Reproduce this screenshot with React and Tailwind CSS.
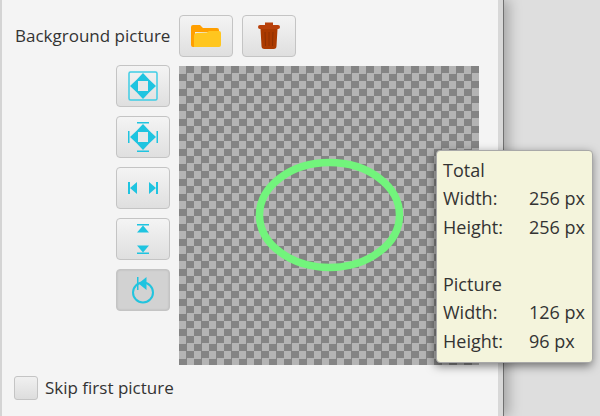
import React from 'react';

const FONT = { fontFamily: '"Open Sans", sans-serif' };

// raised toolbar button, the pressed one is darker
const ToolButton = ({ pressed, children }) => (
  <div
    className={
      'flex h-[42px] w-[54px] items-center justify-center rounded-[4px] border border-[#c4c4c4] ' +
      (pressed
        ? 'bg-[#d2d2d2] shadow-[inset_0_0_2px_#b0b0b0]'
        : 'bg-gradient-to-b from-[#f4f4f4] to-[#dfdfdf]')
    }
  >
    {children}
  </div>
);

const FolderIcon = () => (
  <svg width="30" height="24" viewBox="0 0 30 24">
    <path d="M0 3a2 2 0 0 1 2-2h7l3 3h14a2 2 0 0 1 2 2v2H4v15H2a2 2 0 0 1-2-2z" fill="#ff9f00" />
    <path d="M3 12a3 3 0 0 1 3-3l10-.5 2-1.500h10a2 2 0 0 1 2 2V21a2 2 0 0 1-2 2H3z" fill="#ffc61f" />
  </svg>
);

const TrashIcon = () => (
  <svg width="22" height="27" viewBox="0 0 22 27">
    <path d="M7 3V0.500h8V3h5a1.800 1.800 0 0 1 0 4H2a1.800 1.800 0 0 1 0-4z" fill="#b8400a" />
    <path d="M2.500 7h17l-1 17a3 3 0 0 1-3 3h-9a3 3 0 0 1-3-3z" fill="#ab3a00" />
    <path d="M7 10l.5 14M11 10v14M15 10l-.5 14" stroke="#8e3000" strokeWidth="1" />
  </svg>
);

const Arrows = ({ frame, bars }) => (
  <svg width="30" height="30" viewBox="0 0 30 30" fill="#1fc4e0">
    {frame && <rect x="1" y="1" width="28" height="28" rx="1.500" fill="none" stroke="#3fcde5" strokeWidth="1.500" />}
    <path d="M15 2l7.500 8h-15zM15 28l-7.500-8h15zM2 15l8-7.500v15zM28 15l-8 7.500v-15z" />
    <rect x="10" y="10" width="10" height="10" fill="#e8e8e8" />
    {bars && <path d="M9 0h12v1.500H9zM9 28.500h12V30H9zM0 9h1.500v12H0zM28.500 9H30v12h-1.500z" />}
  </svg>
);

const HorizontalIcon = () => (
  <svg width="30" height="12" viewBox="0 0 30 12" fill="#1fc4e0">
    <path d="M0 0h2v12H0zM2 6l7-6v12zM30 0h-2v12h2zM28 6l-7 6V0z" />
  </svg>
);

const VerticalIcon = () => (
  <svg width="12" height="30" viewBox="0 0 12 30" fill="#1fc4e0">
    <path d="M0 0h12v1.500H0zM6 1.500l6 7H0zM0 30h12v-1.500H0zM6 28.500l-6-7h12z" />
  </svg>
);

const RotateIcon = () => (
  <svg width="24" height="30" viewBox="0 0 24 30">
    <circle cx="12" cy="17.500" r="10" fill="none" stroke="#22c4de" strokeWidth="2" />
    <path d="M6 2h1.500v13H6zM7.500 8.500l8-6.500v13z" fill="#1fc4e0" />
  </svg>
);

const InfoRow = ({ label, value }) => (
  <div className="flex h-[28.500px] items-center">
    <span className="w-[86px]">{label}</span>
    <span>{value}</span>
  </div>
);

export default function App() {
  return (
    <div className="flex h-[416px] w-[600px] overflow-hidden bg-[#dedede] text-[17px] text-[#333333]" style={FONT}>
      <div className="relative flex h-full w-[504px] shrink-0 flex-col border-r border-r-[#707070] border-l-2 border-l-[#d4d4d4] bg-[#f4f4f4] pl-[13px] shadow-[inset_-5px_0_0_#d8d8d8,5px_0_12px_rgba(0,0,0,0.25)]">
        <div className="flex h-[65px] items-center pb-[4px] pt-[10px]">
          <span className="w-[164px] whitespace-nowrap">Background picture</span>
          <div className="flex gap-[9px]">
            <ToolButton><FolderIcon /></ToolButton>
            <ToolButton><TrashIcon /></ToolButton>
          </div>
        </div>
        <div className="flex">
          <div className="ml-[101px] flex flex-col gap-[9px]">
            <ToolButton><Arrows frame /></ToolButton>
            <ToolButton><Arrows bars /></ToolButton>
            <ToolButton><HorizontalIcon /></ToolButton>
            <ToolButton><VerticalIcon /></ToolButton>
            <ToolButton pressed><RotateIcon /></ToolButton>
          </div>
          <div className="ml-[9px] mt-px flex h-[299px] w-[300px] items-center justify-center bg-[repeating-conic-gradient(#848484_0_25%,#b4b4b4_0_50%)] bg-[length:15px_15px]">
            <svg width="300" height="299" viewBox="0 0 300 299">
              <ellipse cx="150.500" cy="149" rx="70" ry="52.500" fill="none" stroke="#72f47c" strokeWidth="7.500" />
            </svg>
          </div>
        </div>
        <div className="-ml-px mt-[10px] flex items-center">
          <div className="h-[24px] w-[24px] rounded-[3px] border border-[#c4c4c4] bg-gradient-to-b from-[#f0f0f0] to-[#dddddd]" />
          <span className="ml-[7px]">Skip first picture</span>
        </div>
        <div className="absolute left-[434px] top-[150px] h-[213px] w-[157px] rounded-[4px] border border-[#a8a8a8] bg-[#f4f4dc] px-[6px] pt-[5px] text-[18px] shadow-[-1px_3px_10px_rgba(0,0,0,0.5)]">
          <div className="flex h-[28.500px] items-center">Total</div>
          <InfoRow label="Width:" value="256 px" />
          <InfoRow label="Height:" value="256 px" />
          <div className="h-[28.500px]" />
          <div className="flex h-[28.500px] items-center">Picture</div>
          <InfoRow label="Width:" value="126 px" />
          <InfoRow label="Height:" value="96 px" />
        </div>
      </div>
    </div>
  );
}
